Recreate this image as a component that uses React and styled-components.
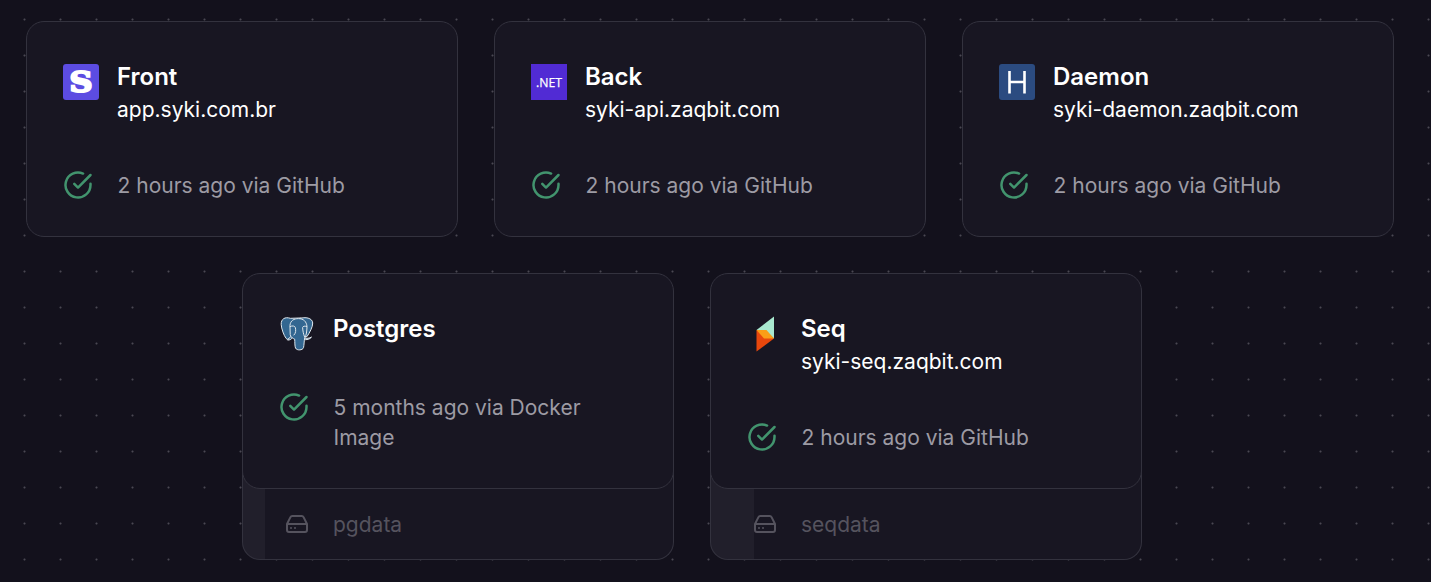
import React from "react";
import styled, { createGlobalStyle } from "styled-components";

const GlobalStyle = createGlobalStyle`
  * { box-sizing: border-box; }
  html, body { margin: 0; padding: 0; background: #13111c; }
  body { overflow: hidden; }
`;

const Canvas = styled.main`
  width: 1431px;
  height: 582px;
  padding: 21px 26px;
  display: flex;
  flex-direction: column;
  gap: 36px;
  overflow: hidden;
  background-color: #13111c;
  background-image: radial-gradient(circle at 18.5px 18.5px, #4a4752 0.5px, rgba(74, 71, 82, 0) 1.5px);
  background-size: 36px 36px;
  background-position: 6px 1px;
  font-family: Inter, "Liberation Sans", sans-serif;
  color: #fff;
`;

const Row = styled.div`
  display: flex;
  align-items: flex-start;
  gap: 36px;
  padding-left: ${(p) => p.$indent || 0}px;
`;

const Service = styled.section`
  display: flex;
  flex-direction: column;
  width: 432px;
`;

const Card = styled.article`
  position: relative;
  z-index: 1;
  display: flex;
  flex-direction: column;
  justify-content: space-between;
  height: 216px;
  padding: 36px;
  border: 1px solid #33323e;
  border-radius: 18px;
  background: #181622;
`;

const Header = styled.header`
  display: flex;
  gap: 18px;
`;

const Logo = styled.svg`
  display: block;
  flex: none;
  width: 36px;
  height: 36px;
  margin-top: 6px;
`;

const Heading = styled.div`
  display: flex;
  flex-direction: column;
  padding-top: 2px;
`;

const Name = styled.h2`
  margin: 0;
  font-size: 24px;
  font-weight: 600;
  line-height: 34px;
`;

const Domain = styled.span`
  font-size: 21px;
  line-height: 31px;
`;

const Status = styled.footer`
  display: flex;
  gap: 24.5px;
  color: #9d9ba4;
`;

const StatusIcon = styled.svg`
  display: block;
  flex: none;
  width: 30px;
  height: 30px;
  fill: none;
  stroke: #42946e;
  stroke-width: 2;
  stroke-linecap: round;
  stroke-linejoin: round;
`;

const StatusText = styled.span`
  margin-bottom: -1px;
  padding-top: 1px;
  font-size: 21px;
  line-height: 30px;
`;

const Volume = styled.div`
  display: flex;
  align-items: center;
  gap: 24px;
  height: 90px;
  margin-top: -19px;
  padding: 18px 42px 0;
  border: 1px solid #33323e;
  border-top: 0;
  border-radius: 0 0 18px 18px;
  background: linear-gradient(to right, #211f2b ${(p) => p.$used}px, #181622 ${(p) => p.$used}px);
  color: #55535e;
`;

const DriveIcon = styled.svg`
  display: block;
  flex: none;
  width: 24px;
  height: 24px;
  fill: none;
  stroke: currentColor;
  stroke-width: 2;
  stroke-linecap: round;
  stroke-linejoin: round;
`;

const VolumeName = styled.span`
  padding-top: 2px;
  font-size: 21px;
  line-height: 30px;
`;

const FrontLogo = () => (
  <Logo viewBox="0 0 36 36">
    <rect width="36" height="36" rx="3" fill="#5c4ce2" />
    <text transform="translate(18 28) scale(1.18 1)" textAnchor="middle" fontFamily="DejaVu Serif, serif" fontWeight="700" fontSize="27" fill="#fff" stroke="#fff" strokeWidth="2">S</text>
  </Logo>
);

const DotnetLogo = () => (
  <Logo viewBox="0 0 36 36">
    <rect width="36" height="36" fill="#512bd4" />
    <text x="18" y="23" textAnchor="middle" textLength="26" lengthAdjust="spacingAndGlyphs" fontFamily="Open Sans, sans-serif" fontWeight="500" fontSize="13.2" fill="#fff" stroke="#fff" strokeWidth="0.25">.NET</text>
  </Logo>
);

const DaemonLogo = () => (
  <Logo viewBox="0 0 36 36">
    <rect width="36" height="36" rx="3" fill="#2b4b80" />
    <path d="M10.500 7v22.500M25.500 7v22.500M10.500 18h15" stroke="#fff" strokeWidth="2.600" fill="none" />
  </Logo>
);

const PostgresLogo = () => (
  <Logo viewBox="0 0 36 36">
    <g fill="#336791" stroke="#dfe7ed" strokeWidth="1" strokeLinejoin="round" strokeLinecap="round">
      <path d="M11 2.200C6 .5 1.900 3 2.200 8.500c.2 4 2.600 11 5 14 1.300 1.600 2.600.7 4-1.200l3-2 8-17Z" />
      <path d="M21 2.500c5-2 12.500-.6 12.700 4.500.1 4-3 9.500-5.700 13.600l-5 1Z" />
      <path d="M23.500 21.300c3 1.600 6 1.400 9-.2-1.500 2.200-4.500 2.900-8.500 2.600Z" />
      <path d="M12.500 20.200c1 1.900.5 3.600-3.900 3.900 1-1.600 2-2.700 3.900-3.900Z" />
      <path d="M11 9C11.500 4.500 15 2.600 19.500 2.600c5 0 8 2.900 8.500 7.900-.2 5-.5 8.500-2.300 11.500-.7 3-.5 7-1.200 9.700-.7 2.500-6.600 3.200-8 .3-.8-2-.6-6-.8-8.800-1.600-.6-4-2-4.400-4.200Z" />
      <path d="M11.200 10.500c2-1 4.800-.8 5.200 1.300.4 2.700.7 5-1.400 7.200" fill="none" />
      <path d="M27.600 10.500c-1.700-.7-3.600-.4-4 1 .3 3.500.6 6 1.900 9.200" fill="none" />
    </g>
  </Logo>
);

const SeqLogo = () => (
  <Logo viewBox="0 0 36 36">
    <path d="M27 .5v22L17 14H9.500Z" fill="#a8e8cf" />
    <path d="M9.500 14 27 22.500 9.500 35.500Z" fill="#e8470c" />
    <path d="M9.500 14h10L27 22.500H17Z" fill="#fa9d17" />
  </Logo>
);

const services = [
  { name: "Front", domain: "app.syki.com.br", status: "2 hours ago via GitHub", Icon: FrontLogo },
  { name: "Back", domain: "syki-api.zaqbit.com", status: "2 hours ago via GitHub", Icon: DotnetLogo },
  { name: "Daemon", domain: "syki-daemon.zaqbit.com", status: "2 hours ago via GitHub", Icon: DaemonLogo },
];

const storageServices = [
  { name: "Postgres", status: "5 months ago via Docker Image", Icon: PostgresLogo, volume: "pgdata", used: 22 },
  { name: "Seq", domain: "syki-seq.zaqbit.com", status: "2 hours ago via GitHub", Icon: SeqLogo, volume: "seqdata", used: 43 },
];

function ServiceCard({ name, domain, status, Icon, volume, used }) {
  return (
    <Service>
      <Card>
        <Header>
          <Icon />
          <Heading>
            <Name>{name}</Name>
            {domain && <Domain>{domain}</Domain>}
          </Heading>
        </Header>
        <Status>
          <StatusIcon viewBox="0 0 24 24">
            <path d="M22 11.080V12a10 10 0 1 1-5.930-9.140" />
            <path d="m22 4-10 10.010-3-3" />
          </StatusIcon>
          <StatusText>{status}</StatusText>
        </Status>
      </Card>
      {volume && (
        <Volume $used={used}>
          <DriveIcon viewBox="0 0 24 24">
            <path d="M22 12H2M5.450 5.110 2 12v6a2 2 0 0 0 2 2h16a2 2 0 0 0 2-2v-6l-3.450-6.890A2 2 0 0 0 16.760 4H7.240a2 2 0 0 0-1.790 1.110zM6 16h.01M10 16h.01" />
          </DriveIcon>
          <VolumeName>{volume}</VolumeName>
        </Volume>
      )}
    </Service>
  );
}

export default function App() {
  return (
    <>
      <GlobalStyle />
      <Canvas>
        <Row>
          {services.map((s) => <ServiceCard key={s.name} {...s} />)}
        </Row>
        <Row $indent={216}>
          {storageServices.map((s) => <ServiceCard key={s.name} {...s} />)}
        </Row>
      </Canvas>
    </>
  );
}
